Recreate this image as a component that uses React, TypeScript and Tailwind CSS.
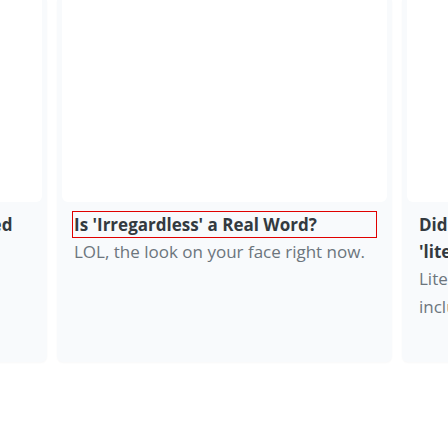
const cards = [
  {
    title: 'Tricky Words You Mispronounced',
    text: 'You might be surprised.',
  },
  {
    title: "Is 'Irregardless' a Real Word?",
    text: 'LOL, the look on your face right now.',
    outlined: true,
  },
  {
    title: "Did the Internet Finally Ruin 'literally'?",
    text: 'Literally everyone uses it wrong, including you and me.',
  },
]

export default function App() {
  return (
    <main className="h-[448px] w-[448px] overflow-hidden bg-white font-['Open_Sans',sans-serif]">
      <div className="ml-[-288px] flex gap-[10px]">
        {cards.map((card) => (
          <div
            key={card.title}
            className="flex h-[362px] w-[335px] shrink-0 flex-col rounded-b-md bg-[#f8fafc] px-[5px] shadow-[0_1px_2px_rgba(15,23,42,0.03)]"
          >
            <div className="h-[202px] shrink-0 rounded-b-md bg-white" />
            <div className="px-[10px] pt-[9px]">
              <h3
                className={
                  card.outlined
                    ? 'pl-[2px] text-[17px] font-bold leading-[27px] text-[#333a40] outline outline-1 outline-[#e00000] -outline-offset-1'
                    : 'pl-[2px] text-[17px] font-bold leading-[27px] text-[#333a40]'
                }
              >
                {card.title}
              </h3>
              <p className="pl-[2px] text-[17px] leading-[28px] text-[#6c757d]">{card.text}</p>
            </div>
          </div>
        ))}
      </div>
    </main>
  )
}
